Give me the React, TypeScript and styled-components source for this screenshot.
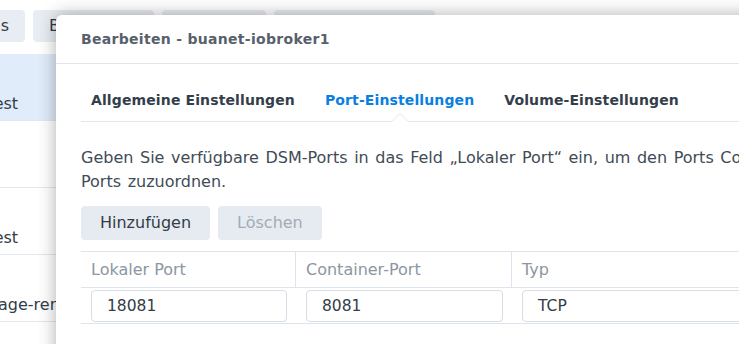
import React from "react";
import styled, { createGlobalStyle } from "styled-components";

const Global = createGlobalStyle`
  html, body { margin: 0; padding: 0; background: #ffffff; overflow: hidden; }
  body { width: 739px; height: 344px; font-family: "DejaVu Sans", Verdana, sans-serif; }
`;

const Stage = styled.div`
  position: relative;
  width: 739px;
  height: 344px;
  overflow: hidden;
  background: #ffffff;
`;

const Page = styled.div`
  margin-left: -75px;
  padding-top: 10px;
  display: flex;
  flex-direction: column;
`;

const Toolbar = styled.div`
  display: flex;
  gap: 8px;
  height: 32px;
`;

const ToolButton = styled.div<{ $w: number; $right?: boolean }>`
  flex: none;
  width: ${(p) => p.$w}px;
  height: 32px;
  border-radius: 4px;
  background: #e8edf3;
  color: #333c47;
  font-size: 16px;
  line-height: 32px;
  padding: 0 16px;
  box-sizing: border-box;
  white-space: nowrap;
  overflow: hidden;
  text-align: ${(p) => (p.$right ? "right" : "left")};
`;

const List = styled.div`
  margin-top: 12px;
  display: flex;
  flex-direction: column;
`;

const Row = styled.div<{ $sel?: boolean }>`
  height: 67px;
  box-sizing: border-box;
  border-bottom: 1px solid #e3e8ef;
  background: ${(p) => (p.$sel ? "#e0ecf9" : "transparent")};
  display: flex;
  align-items: flex-end;
  padding: 0 0 6px 42px;
  font-size: 16px;
  color: #333c47;
  line-height: 20px;
  white-space: nowrap;
`;

const Dialog = styled.div`
  position: absolute;
  left: 56px;
  top: 15px;
  width: 780px;
  height: 400px;
  background: #ffffff;
  border-radius: 6px 0 0 0;
  box-shadow: 0 0 18px rgba(0, 0, 0, 0.32);
  display: flex;
  flex-direction: column;
`;

const Header = styled.div`
  height: 49px;
  box-sizing: border-box;
  border-bottom: 1px solid #dfe6ee;
  padding-left: 25px;
  display: flex;
  align-items: center;
  font-size: 14px;
  letter-spacing: 0.3px;
  font-weight: bold;
  color: #57606b;
`;

const Body = styled.div`
  padding: 0 0 0 25px;
  display: flex;
  flex-direction: column;
`;

const TabBar = styled.div`
  display: flex;
  gap: 10px;
  padding-top: 25px;
  border-bottom: 1px solid #dfe6ee;
`;

const Tab = styled.div<{ $active?: boolean }>`
  position: relative;
  padding: 0 10px 10px;
  line-height: 22px;
  font-size: 14px;
  letter-spacing: 0.12px;
  font-weight: bold;
  color: ${(p) => (p.$active ? "#0b7fe0" : "#343e4a")};
  white-space: nowrap;
  &::before,
  &::after {
    content: "";
    display: ${(p) => (p.$active ? "block" : "none")};
    position: absolute;
    left: 50%;
    width: 0;
    height: 0;
    border-style: solid;
  }
  &::before {
    bottom: -1px;
    margin-left: -9px;
    border-width: 0 9px 9px 9px;
    border-color: transparent transparent #dfe6ee transparent;
  }
  &::after {
    bottom: -1px;
    margin-left: -8px;
    border-width: 0 8px 8px 8px;
    border-color: transparent transparent #ffffff transparent;
  }
`;

const Description = styled.p`
  margin: 24px 0 0;
  font-size: 16px;
  line-height: 24px;
  word-spacing: 1.5px;
  color: #414b56;
  width: 745px;
`;

const ButtonRow = styled.div`
  display: flex;
  gap: 8px;
  margin-top: 12px;
`;

const Button = styled.div<{ $disabled?: boolean }>`
  height: 34px;
  line-height: 34px;
  padding: 0 19px;
  border-radius: 4px;
  background: #e6ebf2;
  font-size: 16px;
  color: ${(p) => (p.$disabled ? "#a3abb5" : "#333c47")};
`;

const Table = styled.div`
  margin-top: 11px;
  display: grid;
  grid-template-columns: 215px 216px 260px;
  border-top: 1px solid #dde4ec;
`;

const HeadCell = styled.div<{ $last?: boolean }>`
  height: 36px;
  box-sizing: border-box;
  border-bottom: 1px solid #dde4ec;
  border-right: ${(p) => (p.$last ? "none" : "1px solid #dde4ec")};
  padding-left: 10px;
  display: flex;
  align-items: center;
  font-size: 16px;
  color: #8d96a1;
`;

const Cell = styled.div`
  height: 36px;
  box-sizing: border-box;
  border-bottom: 1px solid #dde4ec;
  padding: 2px 9px 0 10px;
`;

const Field = styled.div`
  height: 32px;
  box-sizing: border-box;
  border: 1px solid #d6dee7;
  border-radius: 4px;
  padding-left: 15px;
  display: flex;
  align-items: center;
  font-size: 15.5px;
  color: #333c47;
`;

export default function App() {
  return (
    <>
      <Global />
      <Stage>
        <Page>
          <Toolbar>
            <ToolButton $w={100} $right>Details</ToolButton>
            <ToolButton $w={121}>Bearbeiten</ToolButton>
            <ToolButton $w={104}>Aktion</ToolButton>
            <ToolButton $w={161}>Einstellungen</ToolButton>
          </Toolbar>
          <List>
            <Row $sel>pi-test</Row>
            <Row />
            <Row>pi-test</Row>
            <Row>storage-renamer</Row>
          </List>
        </Page>
        <Dialog>
          <Header>Bearbeiten - buanet-iobroker1</Header>
          <Body>
            <TabBar>
              <Tab>Allgemeine Einstellungen</Tab>
              <Tab $active>Port-Einstellungen</Tab>
              <Tab>Volume-Einstellungen</Tab>
            </TabBar>
            <Description>
              Geben Sie verfügbare DSM-Ports in das Feld „Lokaler Port“ ein, um den Ports Container-Ports
              zuzuordnen.
            </Description>
            <ButtonRow>
              <Button>Hinzufügen</Button>
              <Button $disabled>Löschen</Button>
            </ButtonRow>
            <Table>
              <HeadCell>Lokaler Port</HeadCell>
              <HeadCell>Container-Port</HeadCell>
              <HeadCell $last>Typ</HeadCell>
              <Cell>
                <Field>18081</Field>
              </Cell>
              <Cell>
                <Field>8081</Field>
              </Cell>
              <Cell>
                <Field>TCP</Field>
              </Cell>
            </Table>
          </Body>
        </Dialog>
      </Stage>
    </>
  );
}
